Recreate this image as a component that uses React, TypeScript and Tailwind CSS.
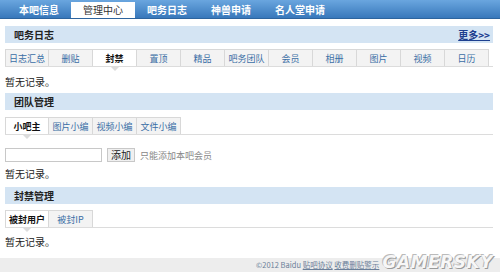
const font = { fontFamily: '"Noto Sans CJK SC", "Liberation Sans", sans-serif' };

const navTabs = ["本吧信息", "管理中心", "吧务日志", "神兽申请", "名人堂申请"];
const logTabs = ["日志汇总", "删贴", "封禁", "置顶", "精品", "吧务团队", "会员", "相册", "图片", "视频", "日历"];
const teamTabs = ["小吧主", "图片小编", "视频小编", "文件小编"];
const banTabs = ["被封用户", "被封IP"];

function SectionHead({ title, more }: { title: string; more?: boolean }) {
  return (
    <div className="ml-[5px] mr-[7px] h-[17px] bg-[#d4e4f3] flex items-center justify-between pl-[9px] pr-[3px] leading-none">
      <span className="text-[10px] font-bold text-[#222]">{title}</span>
      {more && (
        <span className="text-[10px] font-bold text-[#1d3f8f] underline">更多&gt;&gt;</span>
      )}
    </div>
  );
}

function SubTabs({ tabs, active, fill }: { tabs: string[]; active: number; fill?: boolean }) {
  return (
    <div className="flex ml-[5px] mr-[7px] border-b border-[#dcdcdc] h-[18px] leading-none">
      {tabs.map((t, i) => (
        <div
          key={t}
          className={
            "relative w-[44px] shrink-0 flex items-center justify-center whitespace-nowrap text-[9px] border-t border-r border-[#d8d8d8] " +
            (i === 0 ? "border-l " : "") +
            (i === active ? "bg-white font-bold text-[#111]" : "bg-[#f3f3f3] text-[#3a6ea5]")
          }
        >
          {t}
          {i === active && (
            <span className="absolute left-1/2 -translate-x-1/2 -bottom-[5px] w-0 h-0 border-l-[4px] border-r-[4px] border-t-[4px] border-l-transparent border-r-transparent border-t-[#dcdcdc]" />
          )}
        </div>
      ))}
      {fill && <div className="flex-1" />}
    </div>
  );
}

function Empty({ top }: { top: string }) {
  return <div className={"ml-[5px] h-[10px] text-[10px] text-[#222] leading-[10px] " + top}>暂无记录。</div>;
}

export default function App() {
  return (
    <div className="relative w-[500px] h-[272px] bg-white overflow-hidden flex flex-col" style={font}>
      <div className="h-[19px] shrink-0 bg-gradient-to-b from-[#6aa6df] to-[#3878bb] border-b border-[#2d649e] flex items-end pl-[7px] leading-none">
        {navTabs.map((t, i) => (
          <div
            key={t}
            className={
              "h-[16px] flex items-center justify-center whitespace-nowrap text-[10px] " +
              (i === 4 ? "w-[74px] " : "w-[64px] ") +
              (i === 1 ? "bg-white text-[#333]" : "text-white font-bold")
            }
          >
            {t}
          </div>
        ))}
      </div>

      <div className="mt-[7px]">
        <SectionHead title="吧务日志" more />
      </div>
      <div className="mt-[6px]">
        <SubTabs tabs={logTabs} active={2} />
      </div>
      <Empty top="mt-[10px]" />

      <div className="mt-[6px]">
        <SectionHead title="团队管理" />
      </div>
      <div className="mt-[7px]">
        <SubTabs tabs={teamTabs} active={0} fill />
      </div>

      <div className="mt-[13px] ml-[5px] h-[14px] flex items-center gap-[5px] leading-none">
        <div className="w-[97px] h-[14px] border border-[#c8c8c8] bg-white" />
        <div className="w-[28px] h-[14px] border border-[#c8c8c8] bg-[#f0f0f0] text-[10px] text-[#222] flex items-center justify-center">
          添加
        </div>
        <span className="text-[9px] text-[#888]">只能添加本吧会员</span>
      </div>
      <Empty top="mt-[7px]" />

      <div className="mt-[8px]">
        <SectionHead title="封禁管理" />
      </div>
      <div className="mt-[6px]">
        <SubTabs tabs={banTabs} active={0} fill />
      </div>
      <Empty top="mt-[9px]" />

      <div className="mt-auto h-[14px] shrink-0 bg-[#ededed] flex items-center pl-[256px] leading-none">
        <span className="text-[7.5px] whitespace-nowrap text-[#6b7f99]">
          ©2012 Baidu <span className="underline">贴吧协议</span> <span className="underline">收费删贴警示</span>
        </span>
      </div>

      <span
        className="absolute right-[7px] bottom-[1px] text-[17px] leading-none font-black italic text-[#f7f7f7] tracking-[0.5px] [text-shadow:1px_1px_0_#9a9a9a,-1px_-1px_0_#bbb]"
        style={{ fontFamily: '"DejaVu Sans", sans-serif' }}
      >
        GAMERSKY
      </span>
    </div>
  );
}
